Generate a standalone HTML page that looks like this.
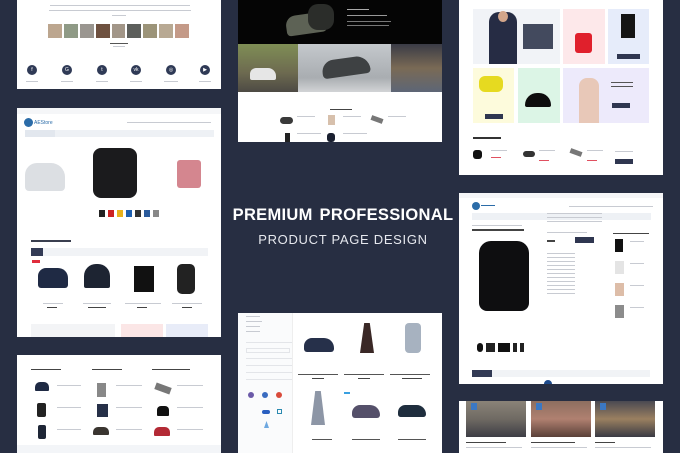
<!DOCTYPE html>
<html><head><meta charset="utf-8"><style>
*{margin:0;padding:0;box-sizing:border-box}
body{width:680px;height:453px;overflow:hidden;background:#272e42;font-family:"Liberation Sans",sans-serif;position:relative}
.p{position:absolute;background:#fff;overflow:hidden}
.a{position:absolute}
.t{position:absolute;height:2px;background:#c8cbd2}
.ci{position:absolute;width:10px;height:10px;border-radius:50%;background:#2f3a56;color:#fff;font-size:5px;text-align:center;line-height:10px}
</style></head><body>

<div class="p" style="left:17px;top:0;width:204px;height:89px">
  <div class="t" style="left:33px;top:5px;width:140px;height:1px"></div>
  <div class="t" style="left:32px;top:10px;width:142px;height:1px"></div>
  <div class="t" style="left:95px;top:15px;width:14px;height:1px"></div>
  <div class="a" style="left:31px;top:24px;width:141px;height:14px;display:flex;gap:2px">
    <div style="flex:1;background:#bca68f"></div><div style="flex:1;background:#8f9a86"></div><div style="flex:1;background:#9a9690"></div><div style="flex:1;background:#6e5140"></div><div style="flex:1;background:#a29688"></div><div style="flex:1;background:#5d5f5c"></div><div style="flex:1;background:#9c9479"></div><div style="flex:1;background:#b8a993"></div><div style="flex:1;background:#c49a88"></div>
  </div>
  <div class="t" style="left:93px;top:43px;width:18px;height:1px;background:#555"></div>
  <div class="t" style="left:96px;top:46px;width:12px;height:1px"></div>
  <div class="ci" style="left:10px;top:65px">f</div>
  <div class="ci" style="left:45px;top:65px">G</div>
  <div class="ci" style="left:80px;top:65px">t</div>
  <div class="ci" style="left:114px;top:65px">vk</div>
  <div class="ci" style="left:149px;top:65px">◎</div>
  <div class="ci" style="left:183px;top:65px">▶</div>
  <div class="t" style="left:9px;top:81px;width:12px;height:1px"></div><div class="t" style="left:44px;top:81px;width:12px;height:1px"></div><div class="t" style="left:79px;top:81px;width:12px;height:1px"></div><div class="t" style="left:113px;top:81px;width:12px;height:1px"></div><div class="t" style="left:147px;top:81px;width:14px;height:1px"></div><div class="t" style="left:182px;top:81px;width:12px;height:1px"></div>
</div>

<div class="p" style="left:17px;top:108px;width:204px;height:229px">
  <div class="a" style="left:0;top:0;width:204px;height:6px;background:#f5f6f8"></div>
  <div class="a" style="left:7px;top:10px;width:9px;height:9px;border-radius:50%;background:#2b6ca8"></div>
  <div class="a" style="left:17px;top:12px;font-size:5px;color:#2b6ca8">AEStore</div>
  <div class="t" style="left:110px;top:14px;width:84px;height:1px"></div>
  <div class="a" style="left:8px;top:22px;width:189px;height:7px;background:#eef1f5"></div>
  <div class="a" style="left:8px;top:22px;width:30px;height:7px;background:#e2e7ee"></div>
  <div class="a" style="left:8px;top:55px;width:40px;height:28px;background:#dcdfe3;border-radius:12px 14px 4px 4px"></div>
  <div class="a" style="left:76px;top:40px;width:44px;height:50px;background:#1b1b1d;border-radius:8px"></div>
  <div class="a" style="left:160px;top:52px;width:24px;height:28px;background:#d4868f;border-radius:3px"></div>
  <div class="a" style="left:82px;top:102px;display:flex;gap:3px">
    <div style="width:6px;height:7px;background:#222"></div><div style="width:6px;height:7px;background:#c22"></div><div style="width:6px;height:7px;background:#e8b21c"></div><div style="width:6px;height:7px;background:#1d5fb0"></div><div style="width:6px;height:7px;background:#333"></div><div style="width:6px;height:7px;background:#2b5b9c"></div><div style="width:6px;height:7px;background:#888"></div>
  </div>
  <div class="t" style="left:14px;top:132px;width:40px;height:2px;background:#3a3f4f"></div>
  <div class="a" style="left:14px;top:140px;width:177px;height:8px;background:#f1f3f6"></div>
  <div class="a" style="left:14px;top:140px;width:12px;height:8px;background:#333b55"></div>
  <div class="a" style="left:15px;top:152px;width:8px;height:3px;background:#e02d3c"></div>
  <div class="a" style="left:21px;top:160px;width:30px;height:20px;background:#1f2a44;border-radius:8px 10px 3px 3px"></div>
  <div class="a" style="left:67px;top:156px;width:26px;height:24px;background:#1d2432;border-radius:12px 12px 2px 2px"></div>
  <div class="a" style="left:117px;top:158px;width:20px;height:26px;background:#111"></div>
  <div class="a" style="left:160px;top:156px;width:18px;height:30px;background:#222;border-radius:5px"></div>
  <div class="t" style="left:26px;top:195px;width:20px;height:1px"></div><div class="t" style="left:66px;top:195px;width:28px;height:1px"></div><div class="t" style="left:108px;top:195px;width:36px;height:1px"></div><div class="t" style="left:155px;top:195px;width:30px;height:1px"></div>
  <div class="t" style="left:30px;top:199px;width:10px;height:1px;background:#444"></div><div class="t" style="left:71px;top:199px;width:18px;height:1px;background:#444"></div><div class="t" style="left:120px;top:199px;width:10px;height:1px;background:#444"></div><div class="t" style="left:165px;top:199px;width:10px;height:1px;background:#444"></div>
  <div class="a" style="left:14px;top:216px;width:84px;height:13px;background:#f3f4f6"></div>
  <div class="a" style="left:104px;top:216px;width:42px;height:13px;background:#fbe6e6"></div>
  <div class="a" style="left:149px;top:216px;width:42px;height:13px;background:#e8ecf8"></div>
</div>

<div class="p" style="left:17px;top:355px;width:204px;height:98px">
  <div class="t" style="left:14px;top:14px;width:30px;height:1px;background:#444"></div>
  <div class="t" style="left:75px;top:14px;width:30px;height:1px;background:#444"></div>
  <div class="t" style="left:135px;top:14px;width:38px;height:1px;background:#444"></div>
  <div class="a" style="left:18px;top:27px;width:14px;height:9px;background:#1f2a44;border-radius:5px 5px 1px 1px"></div>
  <div class="a" style="left:20px;top:48px;width:9px;height:14px;background:#222;border-radius:2px"></div>
  <div class="a" style="left:21px;top:70px;width:8px;height:14px;background:#1e2636;border-radius:2px"></div>
  <div class="a" style="left:80px;top:28px;width:9px;height:14px;background:#888"></div>
  <div class="a" style="left:80px;top:49px;width:11px;height:13px;background:#263048"></div>
  <div class="a" style="left:76px;top:72px;width:16px;height:8px;background:#3a3530;border-radius:5px 5px 1px 1px"></div>
  <div class="a" style="left:138px;top:30px;width:16px;height:7px;background:#777;transform:rotate(20deg)"></div>
  <div class="a" style="left:140px;top:51px;width:12px;height:10px;background:#111;border-radius:4px 4px 1px 1px"></div>
  <div class="a" style="left:137px;top:72px;width:16px;height:9px;background:#b32a35;border-radius:5px 5px 1px 1px"></div>
  <div class="t" style="left:40px;top:30px;width:24px;height:1px"></div><div class="t" style="left:40px;top:52px;width:24px;height:1px"></div><div class="t" style="left:40px;top:74px;width:24px;height:1px"></div>
  <div class="t" style="left:99px;top:30px;width:26px;height:1px"></div><div class="t" style="left:99px;top:52px;width:26px;height:1px"></div><div class="t" style="left:99px;top:74px;width:26px;height:1px"></div>
  <div class="t" style="left:160px;top:30px;width:26px;height:1px"></div><div class="t" style="left:160px;top:52px;width:26px;height:1px"></div><div class="t" style="left:160px;top:74px;width:26px;height:1px"></div>
  <div class="a" style="left:0;top:90px;width:204px;height:8px;background:#f3f5f8"></div>
</div>

<div class="p" style="left:238px;top:0;width:204px;height:142px">
  <div class="a" style="left:0;top:0;width:204px;height:44px;background:#050505"></div>
  <div class="a" style="left:48px;top:14px;width:40px;height:20px;background:#5d6255;border-radius:10px 14px 4px 4px;transform:rotate(-8deg)"></div>
  <div class="a" style="left:70px;top:4px;width:26px;height:26px;background:#2b2d2a;border-radius:10px"></div>
  <div class="t" style="left:109px;top:9px;width:22px;height:1px;background:#aaa"></div>
  <div class="t" style="left:109px;top:15px;width:40px;height:1px;background:#999"></div>
  <div class="t" style="left:109px;top:21px;width:44px;height:1px;background:#777"></div>
  <div class="t" style="left:109px;top:25px;width:42px;height:1px;background:#777"></div>
  <div class="a" style="left:0;top:44px;width:60px;height:48px;background:linear-gradient(180deg,#7f8e55,#6d6a50 60%,#4d4a44)"></div>
  <div class="a" style="left:12px;top:68px;width:26px;height:12px;background:#e6e6e6;border-radius:6px 8px 2px 2px"></div>
  <div class="a" style="left:60px;top:44px;width:93px;height:48px;background:linear-gradient(180deg,#c4c8cc,#a9adb1 70%,#d2d4d6)"></div>
  <div class="a" style="left:84px;top:58px;width:48px;height:18px;background:#3e4143;border-radius:12px 14px 4px 4px;transform:rotate(-8deg)"></div>
  <div class="a" style="left:153px;top:44px;width:51px;height:48px;background:linear-gradient(180deg,#3a3b46,#7a6a55 50%,#5d6676)"></div>
  <div class="t" style="left:92px;top:109px;width:22px;height:1px;background:#444"></div>
  <div class="a" style="left:42px;top:117px;width:13px;height:7px;background:#3a3a3a;border-radius:4px"></div>
  <div class="a" style="left:90px;top:115px;width:7px;height:10px;background:#d7c0ac"></div>
  <div class="a" style="left:133px;top:117px;width:12px;height:5px;background:#777;transform:rotate(20deg)"></div>
  <div class="a" style="left:47px;top:133px;width:5px;height:9px;background:#222"></div>
  <div class="a" style="left:89px;top:133px;width:8px;height:9px;background:#1a2030;border-radius:3px"></div>
  <div class="t" style="left:59px;top:116px;width:18px;height:1px"></div><div class="t" style="left:105px;top:116px;width:18px;height:1px"></div><div class="t" style="left:150px;top:116px;width:18px;height:1px"></div>
  <div class="t" style="left:59px;top:133px;width:24px;height:1px"></div><div class="t" style="left:105px;top:133px;width:24px;height:1px"></div>
</div>

<div class="p" style="left:238px;top:313px;width:204px;height:140px">
  <div class="a" style="left:0;top:0;width:55px;height:140px;background:#fafbfc;border-right:1px solid #eee"></div>
  <div class="t" style="left:8px;top:3px;width:14px;height:1px"></div><div class="t" style="left:8px;top:8px;width:16px;height:1px"></div><div class="t" style="left:8px;top:13px;width:14px;height:1px"></div><div class="t" style="left:8px;top:18px;width:14px;height:1px"></div>
  <div class="t" style="left:8px;top:29px;width:46px;height:1px;background:#e3e5e9"></div>
  <div class="a" style="left:8px;top:35px;width:44px;height:5px;border:1px solid #e3e5e9"></div>
  <div class="t" style="left:8px;top:45px;width:46px;height:1px;background:#e3e5e9"></div><div class="t" style="left:8px;top:52px;width:46px;height:1px;background:#e3e5e9"></div><div class="t" style="left:8px;top:59px;width:46px;height:1px;background:#e3e5e9"></div><div class="t" style="left:8px;top:66px;width:46px;height:1px;background:#e3e5e9"></div>
  <div class="a" style="left:10px;top:79px;width:6px;height:6px;background:#6b5aa8;border-radius:50%"></div>
  <div class="a" style="left:24px;top:79px;width:6px;height:6px;background:#3a6cc0;border-radius:50%"></div>
  <div class="a" style="left:38px;top:79px;width:6px;height:6px;background:#d94b3b;border-radius:50%"></div>
  <div class="a" style="left:24px;top:97px;width:8px;height:4px;background:#2a5fc0;border-radius:2px"></div>
  <div class="a" style="left:39px;top:96px;width:5px;height:5px;border:1px solid #2a8ab0"></div>
  <div class="a" style="left:26px;top:108px;width:5px;height:7px;background:#6ea8e0;clip-path:polygon(50% 0,100% 100%,0 100%)"></div>
  <div class="a" style="left:66px;top:25px;width:30px;height:14px;background:#26304a;border-radius:8px 10px 3px 3px"></div>
  <div class="a" style="left:122px;top:10px;width:14px;height:30px;background:#3a2826;clip-path:polygon(30% 0,70% 0,100% 100%,0 100%)"></div>
  <div class="a" style="left:167px;top:10px;width:16px;height:30px;background:#a7b2c0;border-radius:4px"></div>
  <div class="t" style="left:60px;top:61px;width:40px;height:1px;background:#555"></div><div class="t" style="left:106px;top:61px;width:40px;height:1px;background:#555"></div><div class="t" style="left:152px;top:61px;width:40px;height:1px;background:#555"></div>
  <div class="t" style="left:74px;top:65px;width:12px;height:1px;background:#444"></div><div class="t" style="left:120px;top:65px;width:12px;height:1px;background:#444"></div><div class="t" style="left:164px;top:65px;width:20px;height:1px;background:#444"></div>
  <div class="a" style="left:73px;top:78px;width:14px;height:34px;background:#8d96a6;clip-path:polygon(30% 0,70% 0,100% 100%,0 100%)"></div>
  <div class="a" style="left:106px;top:79px;width:6px;height:2px;background:#3aa0e0"></div>
  <div class="a" style="left:114px;top:92px;width:28px;height:13px;background:#55506a;border-radius:8px 10px 3px 3px"></div>
  <div class="a" style="left:160px;top:92px;width:28px;height:12px;background:#1f2e3e;border-radius:8px 10px 3px 3px"></div>
  <div class="t" style="left:74px;top:126px;width:20px;height:1px;background:#555"></div><div class="t" style="left:114px;top:126px;width:28px;height:1px;background:#555"></div><div class="t" style="left:160px;top:126px;width:28px;height:1px;background:#555"></div>
</div>

<div class="p" style="left:459px;top:0;width:204px;height:175px">
  <div class="a" style="left:14px;top:9px;width:87px;height:55px;background:#f1f3f7"></div>
  <div class="a" style="left:30px;top:12px;width:28px;height:52px;background:#262c44;border-radius:10px 10px 0 0"></div>
  <div class="a" style="left:39px;top:11px;width:10px;height:11px;background:#d2a58a;border-radius:50%"></div>
  <div class="a" style="left:64px;top:24px;width:30px;height:25px;background:#434a5e"></div>
  <div class="a" style="left:104px;top:9px;width:42px;height:55px;background:#fde8ea"></div>
  <div class="a" style="left:116px;top:33px;width:17px;height:20px;background:#e0202c;border-radius:3px"></div>
  <div class="a" style="left:149px;top:9px;width:41px;height:55px;background:#e6ecfa"></div>
  <div class="a" style="left:162px;top:14px;width:14px;height:24px;background:#151515"></div>
  <div class="a" style="left:158px;top:54px;width:23px;height:5px;background:#2f3650"></div>
  <div class="a" style="left:14px;top:68px;width:41px;height:55px;background:#fdfbdc"></div>
  <div class="a" style="left:20px;top:76px;width:24px;height:16px;background:#e6da20;border-radius:6px"></div>
  <div class="a" style="left:26px;top:114px;width:18px;height:5px;background:#2f3650"></div>
  <div class="a" style="left:59px;top:68px;width:42px;height:55px;background:#dcf5e6"></div>
  <div class="a" style="left:66px;top:93px;width:26px;height:14px;background:#0d0d0d;border-radius:12px 12px 2px 2px"></div>
  <div class="a" style="left:104px;top:68px;width:86px;height:55px;background:#edeafb"></div>
  <div class="a" style="left:120px;top:78px;width:20px;height:45px;background:#e8c8b8;border-radius:8px 8px 0 0"></div>
  <div class="a" style="left:153px;top:103px;width:18px;height:5px;background:#2f3650"></div>
  <div class="t" style="left:152px;top:82px;width:22px;height:1px;background:#555"></div><div class="t" style="left:152px;top:86px;width:22px;height:1px;background:#555"></div>
  <div class="t" style="left:14px;top:137px;width:28px;height:2px;background:#333"></div>
  <div class="a" style="left:14px;top:150px;width:9px;height:9px;background:#111;border-radius:3px"></div>
  <div class="a" style="left:64px;top:151px;width:12px;height:6px;background:#333;border-radius:3px"></div>
  <div class="a" style="left:111px;top:150px;width:12px;height:5px;background:#777;transform:rotate(20deg)"></div>
  <div class="a" style="left:156px;top:159px;width:18px;height:5px;background:#2f3650"></div>
  <div class="t" style="left:32px;top:150px;width:16px;height:1px"></div><div class="t" style="left:80px;top:150px;width:16px;height:1px"></div><div class="t" style="left:128px;top:150px;width:16px;height:1px"></div><div class="t" style="left:156px;top:151px;width:18px;height:1px"></div>
  <div class="t" style="left:32px;top:157px;width:10px;height:1px;background:#e05060"></div><div class="t" style="left:80px;top:160px;width:10px;height:1px;background:#e05060"></div><div class="t" style="left:128px;top:160px;width:10px;height:1px;background:#e05060"></div>
</div>

<div class="p" style="left:459px;top:193px;width:204px;height:191px">
  <div class="a" style="left:0;top:0;width:204px;height:5px;background:#f5f6f8"></div>
  <div class="a" style="left:13px;top:9px;width:8px;height:8px;border-radius:50%;background:#2b6ca8"></div>
  <div class="t" style="left:22px;top:12px;width:14px;height:1px;background:#2b6ca8"></div>
  <div class="t" style="left:110px;top:13px;width:84px;height:1px"></div>
  <div class="a" style="left:13px;top:20px;width:179px;height:7px;background:#eef1f5"></div>
  <div class="t" style="left:13px;top:32px;width:50px;height:1px"></div>
  <div class="t" style="left:13px;top:36px;width:52px;height:2px;background:#444"></div>
  <div class="a" style="left:20px;top:48px;width:50px;height:70px;background:#0e0e10;border-radius:12px 12px 8px 8px"></div>
  <div class="a" style="left:18px;top:150px;display:flex;gap:3px">
    <div style="width:6px;height:9px;background:#111;border-radius:3px"></div><div style="width:9px;height:9px;background:#222"></div><div style="width:12px;height:9px;background:#111"></div><div style="width:4px;height:9px;background:#222"></div><div style="width:4px;height:9px;background:#222"></div>
  </div>
  <div class="t" style="left:88px;top:20px;width:55px;height:1px"></div><div class="t" style="left:88px;top:24px;width:55px;height:1px"></div><div class="t" style="left:88px;top:28px;width:55px;height:1px"></div>
  <div class="t" style="left:88px;top:39px;width:40px;height:1px"></div>
  <div class="t" style="left:88px;top:47px;width:8px;height:2px;background:#444"></div>
  <div class="a" style="left:116px;top:44px;width:19px;height:6px;background:#2f3650"></div>
  <div class="t" style="left:88px;top:60px;width:28px;height:1px"></div><div class="t" style="left:88px;top:64px;width:28px;height:1px"></div><div class="t" style="left:88px;top:68px;width:28px;height:1px"></div><div class="t" style="left:88px;top:72px;width:28px;height:1px"></div><div class="t" style="left:88px;top:76px;width:28px;height:1px"></div><div class="t" style="left:88px;top:80px;width:28px;height:1px"></div><div class="t" style="left:88px;top:84px;width:28px;height:1px"></div><div class="t" style="left:88px;top:88px;width:28px;height:1px"></div><div class="t" style="left:88px;top:92px;width:28px;height:1px"></div><div class="t" style="left:88px;top:96px;width:28px;height:1px"></div><div class="t" style="left:88px;top:100px;width:28px;height:1px"></div>
  <div class="t" style="left:154px;top:40px;width:36px;height:1px;background:#444"></div>
  <div class="a" style="left:156px;top:46px;width:8px;height:13px;background:#111"></div>
  <div class="a" style="left:156px;top:68px;width:9px;height:13px;background:#e4e4e4"></div>
  <div class="a" style="left:156px;top:90px;width:9px;height:13px;background:#ddbda8"></div>
  <div class="a" style="left:156px;top:112px;width:9px;height:13px;background:#8c8c8c"></div>
  <div class="t" style="left:171px;top:48px;width:14px;height:1px"></div><div class="t" style="left:171px;top:70px;width:14px;height:1px"></div><div class="t" style="left:171px;top:92px;width:14px;height:1px"></div><div class="t" style="left:171px;top:114px;width:14px;height:1px"></div>
  <div class="a" style="left:13px;top:177px;width:178px;height:7px;background:#f1f3f6"></div>
  <div class="a" style="left:13px;top:177px;width:20px;height:7px;background:#333b55"></div>
  <div class="a" style="left:85px;top:187px;width:8px;height:8px;border-radius:50%;background:#1e4b8c"></div>
</div>

<div class="p" style="left:459px;top:401px;width:204px;height:52px">
  <div class="a" style="left:7px;top:0;width:60px;height:36px;background:linear-gradient(180deg,#8a8378,#6f6a63 50%,#3d3d45)"></div>
  <div class="a" style="left:72px;top:0;width:60px;height:36px;background:linear-gradient(180deg,#8d6e60,#b08070 50%,#5a4038)"></div>
  <div class="a" style="left:136px;top:0;width:60px;height:36px;background:linear-gradient(180deg,#4a4a52,#9a8060 50%,#3a3a44)"></div>
  <div class="a" style="left:12px;top:2px;width:6px;height:7px;background:#3b78c4"></div><div class="a" style="left:77px;top:2px;width:6px;height:7px;background:#3b78c4"></div><div class="a" style="left:141px;top:2px;width:6px;height:7px;background:#3b78c4"></div>
  <div class="t" style="left:7px;top:41px;width:40px;height:1px;background:#444"></div><div class="t" style="left:72px;top:41px;width:44px;height:1px;background:#444"></div><div class="t" style="left:136px;top:41px;width:20px;height:1px;background:#444"></div>
  <div class="t" style="left:7px;top:46px;width:56px;height:1px"></div><div class="t" style="left:72px;top:46px;width:56px;height:1px"></div><div class="t" style="left:136px;top:46px;width:56px;height:1px"></div>
</div>

<div class="a" style="left:220px;top:206px;width:246px;text-align:center;color:#fff;font-weight:bold;font-size:16.5px;letter-spacing:0.3px;white-space:nowrap;word-spacing:2px">PREMIUM PROFESSIONAL</div>
<div class="a" style="left:220px;top:232px;width:246px;text-align:center;color:#e6e8ee;font-size:13px;letter-spacing:0.7px;white-space:nowrap">PRODUCT PAGE DESIGN</div>
</body></html>
